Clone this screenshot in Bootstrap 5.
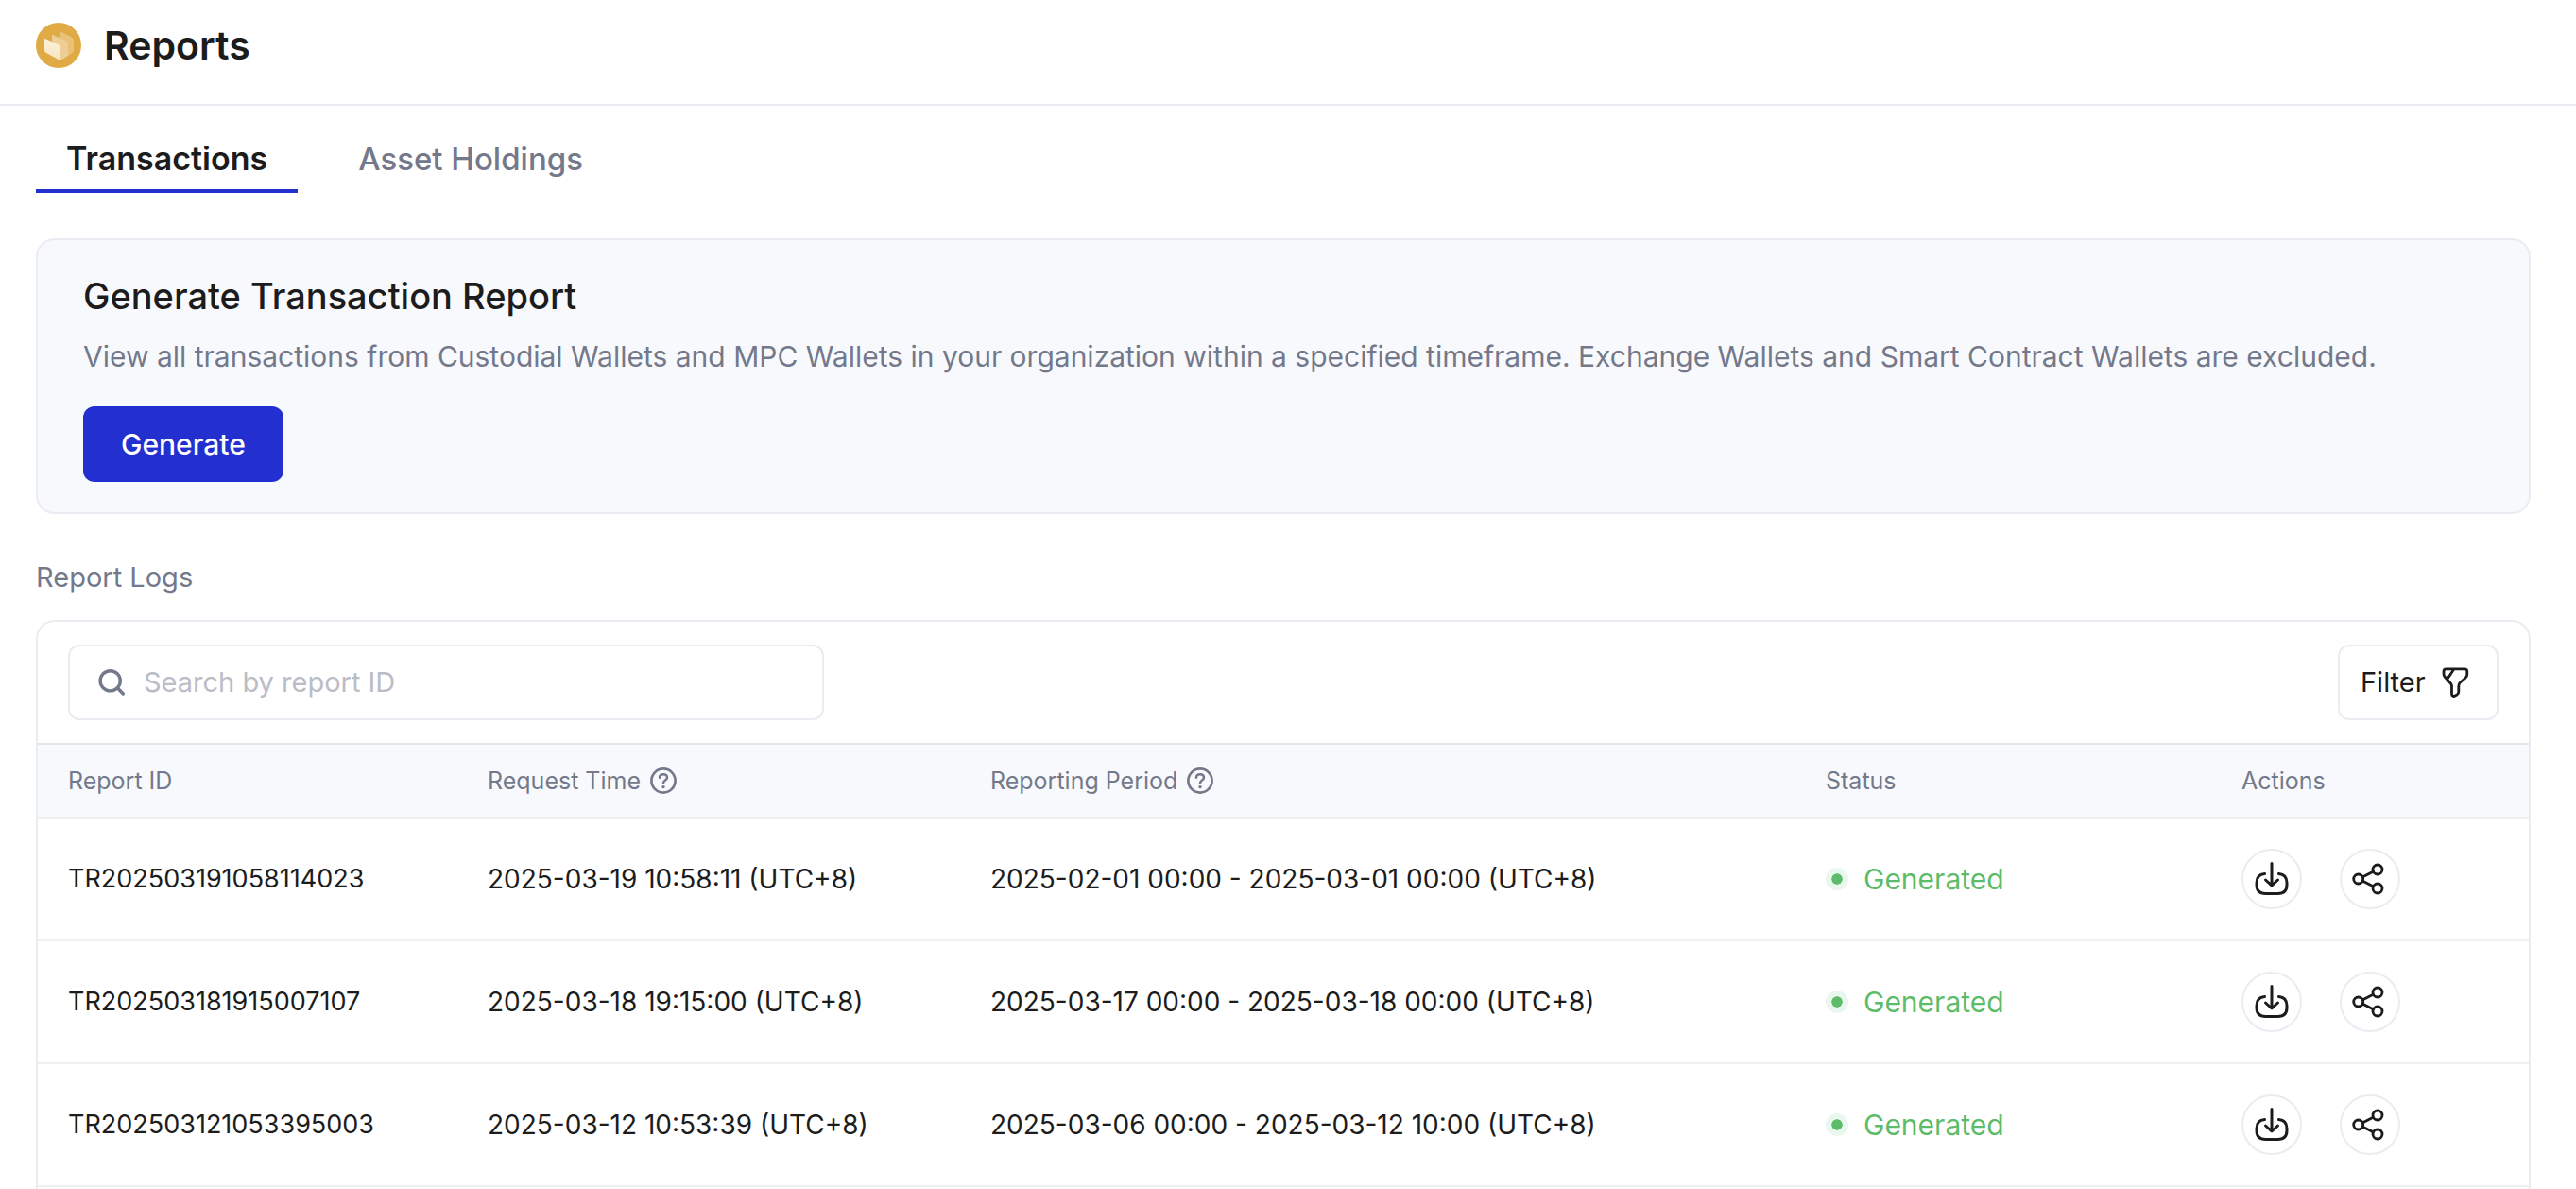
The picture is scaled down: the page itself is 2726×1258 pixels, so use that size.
<!DOCTYPE html>
<html lang="en">
<head>
<meta charset="utf-8">
<meta name="viewport" content="width=device-width, initial-scale=1">
<title>Reports</title>
<link href="https://cdn.jsdelivr.net/npm/bootstrap@5.3.0/dist/css/bootstrap.min.css" rel="stylesheet">
<style>
:root { --ink: #1c1c1c; --muted-ink: #73798b; --line: #ebecf2; --tint: #f8f9fd; --brand: #2330cf; --ok: #5cbc6a; }
body { font-family: Inter, "Noto Sans", sans-serif; font-size: 28px; line-height: 42px; color: var(--ink); background: #fff; }
svg { flex: none; fill: none; stroke: currentColor; stroke-linecap: round; stroke-linejoin: round; }
.topbar { height: 112px; padding: 0 38px 14px; gap: 24px; border-bottom: 2px solid var(--line); }
.page-title { font-size: 41px; line-height: 60px; font-weight: 600; }
.page-body { padding: 24px 48px 0 38px; }
.tab-list { gap: 32px; }
.tab-list .nav-link { font-size: 33px; line-height: 48px; padding: 8px 32px; border-radius: 0; color: var(--muted-ink); font-weight: 500; border-bottom: 4px solid transparent; }
.tab-list .nav-link.active { font-size: 34px; color: var(--ink); font-weight: 600; border-color: var(--brand); }
.tab-list .nav-link { height: 68px; }
.promo { margin-top: 48px; padding: 32px 48px; background: var(--tint); border: 2px solid var(--line); border-radius: 20px; }
.promo-title { font-size: 38px; line-height: 54px; font-weight: 500; margin: 0 0 16px; }
.promo-text { font-size: 30px; color: var(--muted-ink); margin: 0 0 32px; }
.btn-brand { --bs-btn-bg: var(--brand); --bs-btn-color: #fff; --bs-btn-hover-bg: #1b27b0; --bs-btn-hover-color: #fff; font-size: 30px; line-height: 42px; font-weight: 500; height: 80px; padding: 0 40px; border: 0; border-radius: 12px; }
.logs-title { font-size: 29px; line-height: 42px; font-weight: 400; color: var(--muted-ink); margin: 46px 0 24px; }
.logs { border: 2px solid var(--line); border-bottom: 0; border-radius: 20px 20px 0 0; padding-bottom: 2px; }
.tools { padding: 24px 32px; }
.search-box { width: 800px; height: 80px; border: 2px solid var(--line); border-radius: 12px; padding: 0 30px; gap: 20px; color: var(--muted-ink); }
.search-box .form-control { border: 0; padding: 0; font-size: 29px; line-height: 42px; box-shadow: none; background: transparent; color: var(--ink); }
.search-box .form-control::placeholder { color: #babdc6; }
.btn-filter { --bs-btn-color: var(--ink); --bs-btn-border-color: var(--line); --bs-btn-hover-border-color: #ccd; min-width: 170px; height: 80px; border-width: 2px; border-radius: 12px; padding: 0 28px 0 22px; font-size: 29px; line-height: 42px; }
.log-table { table-layout: fixed; border-collapse: separate; border-spacing: 0; }
.log-table > :not(caption) > * > * { padding: 0 0 0 32px; border-bottom: 2px solid #eff0f1; color: var(--ink); vertical-align: middle; white-space: nowrap; }
.log-table > thead > tr > th { height: 80px; background: var(--tint); color: var(--muted-ink); font-size: 25px; font-weight: 400; border-top: 2px solid #e3e5ea; }
.log-table > tbody > tr > td { height: 130px; }
.log-table > tbody > tr > td.report-no { font-size: 27px; }
.head-label { gap: 10px; }
.col-id { width: 444px; } .col-time { width: 532px; } .col-status { width: 440px; } .col-act { width: 336px; }
.state { gap: 16px; font-size: 30px; color: var(--ok); }
.state-dot { width: 24px; height: 24px; border: 6px solid #eaf7ee; border-radius: 50%; background: var(--ok); background-clip: padding-box; }
.acts { gap: 40px; }
.btn-round { --bs-btn-color: var(--ink); --bs-btn-border-color: var(--line); --bs-btn-hover-border-color: #ccd; width: 64px; height: 64px; padding: 0; border-width: 2px; border-radius: 50%; }
</style>
</head>
<body>
<svg class="d-none" aria-hidden="true">
  <symbol id="i-help" viewBox="0 0 28 28"><circle cx="14" cy="14" r="12.6" stroke-width="2.7"/><path stroke-width="2.5" d="M10 10.8C10 8.6 11.7 7.2 14 7.2S18 8.6 18 10.8C18 13.6 14 13.6 14 16.6"/><circle cx="14" cy="20.6" r="1.7" fill="currentColor" stroke="none"/></symbol>
  <symbol id="i-download" viewBox="0 0 64 64"><path stroke-width="3" d="M32 15.500V38.500M25.500 33 32 39 38.500 33M24.500 26.500C18.500 27 16 30 16 36V38Q16 47.500 25.500 47.500H38.500Q48 47.500 48 38V36C48 30 45.500 27 39.500 26.500"/></symbol>
  <symbol id="i-share" viewBox="0 0 64 64"><g stroke-width="2.8"><circle cx="19.700" cy="32" r="5"/><circle cx="40" cy="22" r="5"/><circle cx="40" cy="42" r="5"/><path d="M24.500 29.700 35.300 24.300M24.500 34.300 35.300 39.700"/></g></symbol>
</svg>

<header class="topbar d-flex align-items-center">
  <svg width="48" height="48" viewBox="0 0 48 48" role="img" aria-label="Logo">
    <defs><linearGradient id="page" x1="0" y1="0" x2="0" y2="1"><stop offset="0" stop-color="#fbf1dc"/><stop offset="1" stop-color="#f6e5c0"/></linearGradient></defs>
    <g stroke="none">
      <circle cx="24" cy="24" r="24" fill="#e0aa45"/>
      <path fill="#e9c177" d="M25.300 9 37.300 15Q40 16.500 40 19V30.500L33.700 35.500 25.300 30Z"/>
      <path fill="#edcf95" d="M17 12.700 31 18.500Q33.700 20 33.700 22.500V35.300L25.700 40 17 34Z"/>
      <path fill="url(#page)" d="M9 16.700 22.500 22.500Q25.700 24 25.700 27V40L10.500 31.700Q9 30.800 9 29Z"/>
    </g>
  </svg>
  <h1 class="page-title m-0">Reports</h1>
</header>

<main class="page-body">
  <nav class="nav tab-list" aria-label="Report types">
    <a class="nav-link active" aria-current="page" href="#">Transactions</a>
    <a class="nav-link" href="#">Asset Holdings</a>
  </nav>

  <section class="promo">
    <h2 class="promo-title">Generate Transaction Report</h2>
    <p class="promo-text">View all transactions from Custodial Wallets and MPC Wallets in your organization within a specified timeframe. Exchange Wallets and Smart Contract Wallets are excluded.</p>
    <button type="button" class="btn btn-brand d-block">Generate</button>
  </section>

  <h2 class="logs-title">Report Logs</h2>
  <section class="logs">
    <div class="tools d-flex justify-content-between align-items-center">
      <label class="search-box d-flex align-items-center">
        <svg width="28" height="28" viewBox="0 0 28 28" stroke-width="3.400" aria-hidden="true"><circle cx="12.700" cy="12.300" r="10.600"/><path d="M20.500 20 26.300 26"/></svg>
        <input class="form-control" type="search" placeholder="Search by report ID" aria-label="Search by report ID">
      </label>
      <button type="button" class="btn btn-filter d-flex align-items-center justify-content-between">Filter
        <svg width="32" height="32" viewBox="0 0 32 32" stroke-width="2.800" aria-hidden="true"><path d="M6.500 1.800H26Q28.800 1.800 28.800 4.600V7.500Q28.800 9.500 27 11.300L21.500 16Q19.800 17.500 19.800 20V26Q19.800 28 18 29L15.500 30.300Q12.500 31.300 12.500 27.500V20Q12.500 18.300 11.300 17L5.300 10.300Q4 8.800 4 7.300V4.500Q4 1.800 6.500 1.800ZM14.500 2.500 7.800 12.500"/></svg>
      </button>
    </div>
    <table class="table log-table mb-0">
      <colgroup><col class="col-id"><col class="col-time"><col><col class="col-status"><col class="col-act"></colgroup>
      <thead>
        <tr>
          <th scope="col">Report ID</th>
          <th scope="col"><div class="head-label d-flex align-items-center">Request Time <svg width="28" height="28" aria-hidden="true"><use href="#i-help"/></svg></div></th>
          <th scope="col"><div class="head-label d-flex align-items-center">Reporting Period <svg width="28" height="28" aria-hidden="true"><use href="#i-help"/></svg></div></th>
          <th scope="col">Status</th>
          <th scope="col">Actions</th>
        </tr>
      </thead>
      <tbody>
        <tr>
          <td class="report-no">TR202503191058114023</td>
          <td>2025-03-19 10:58:11 (UTC+8)</td>
          <td>2025-02-01 00:00 - 2025-03-01 00:00 (UTC+8)</td>
          <td><div class="state d-flex align-items-center"><span class="state-dot"></span>Generated</div></td>
          <td><div class="acts d-flex"><button type="button" class="btn btn-round d-flex align-items-center justify-content-center" aria-label="Download"><svg width="64" height="64"><use href="#i-download"/></svg></button><button type="button" class="btn btn-round d-flex align-items-center justify-content-center" aria-label="Share"><svg width="64" height="64"><use href="#i-share"/></svg></button></div></td>
        </tr>
        <tr>
          <td class="report-no">TR202503181915007107</td>
          <td>2025-03-18 19:15:00 (UTC+8)</td>
          <td>2025-03-17 00:00 - 2025-03-18 00:00 (UTC+8)</td>
          <td><div class="state d-flex align-items-center"><span class="state-dot"></span>Generated</div></td>
          <td><div class="acts d-flex"><button type="button" class="btn btn-round d-flex align-items-center justify-content-center" aria-label="Download"><svg width="64" height="64"><use href="#i-download"/></svg></button><button type="button" class="btn btn-round d-flex align-items-center justify-content-center" aria-label="Share"><svg width="64" height="64"><use href="#i-share"/></svg></button></div></td>
        </tr>
        <tr>
          <td class="report-no">TR202503121053395003</td>
          <td>2025-03-12 10:53:39 (UTC+8)</td>
          <td>2025-03-06 00:00 - 2025-03-12 10:00 (UTC+8)</td>
          <td><div class="state d-flex align-items-center"><span class="state-dot"></span>Generated</div></td>
          <td><div class="acts d-flex"><button type="button" class="btn btn-round d-flex align-items-center justify-content-center" aria-label="Download"><svg width="64" height="64"><use href="#i-download"/></svg></button><button type="button" class="btn btn-round d-flex align-items-center justify-content-center" aria-label="Share"><svg width="64" height="64"><use href="#i-share"/></svg></button></div></td>
        </tr>
      </tbody>
    </table>
  </section>
</main>
<script src="https://cdn.jsdelivr.net/npm/bootstrap@5.3.0/dist/js/bootstrap.bundle.min.js"></script>
</body>
</html>
